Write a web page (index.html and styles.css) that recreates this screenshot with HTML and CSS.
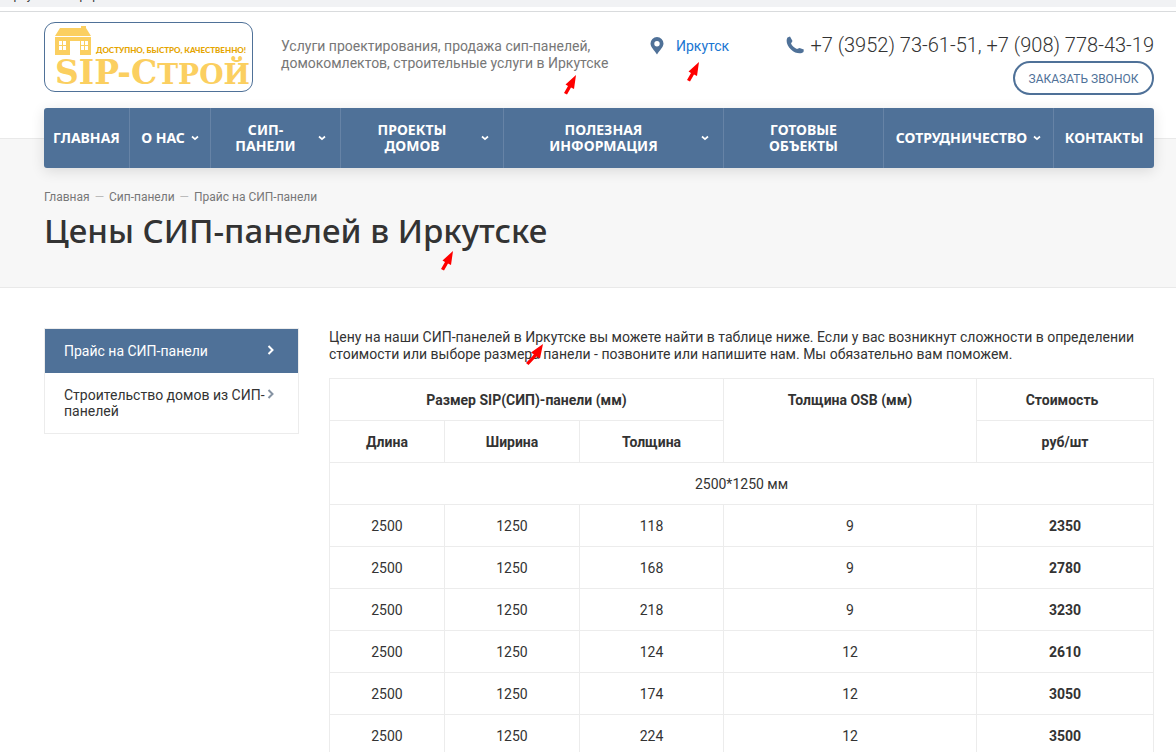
FILE: index.html
```
<!DOCTYPE html>
<html lang="ru">
<head>
<meta charset="utf-8">
<title>Цены СИП-панелей в Иркутске</title>
<link rel="stylesheet" href="styles.css">
</head>
<body>
<svg class="defs" width="0" height="0" aria-hidden="true">
  <symbol id="arrow" viewBox="0 0 12 20"><path d="M12 0 L10 14 L7 12.500 L3 19.500 L0 18 L4 11 L1.500 9.500 Z" fill="#fe0000"/></symbol>
  <symbol id="arrow-long" viewBox="0 0 17 21"><path d="M17 0 L14 14.500 L10.500 12.500 L2.500 21 L0 19 L8 10.500 L5 8.500 Z" fill="#fe0000"/></symbol>
  <symbol id="down" viewBox="0 0 8 6"><path d="M1 1.500 L4 4.200 L7 1.500" fill="none" stroke="#fff" stroke-width="1.700"/></symbol>
  <symbol id="right" viewBox="0 0 7 10"><path d="M1.500 1 L5.500 5 L1.500 9" fill="none" stroke="currentColor" stroke-width="2"/></symbol>
</svg>
<div class="strip"><span>Иркутск</span><span>фирм</span></div>
<header class="header">
  <a class="logo" href="#">
    <span class="logo-top">
      <svg class="house" viewBox="0 0 36 30" aria-hidden="true">
        <path fill="#fbcf60" fill-rule="evenodd" d="M5 3 H26 V1 H31 V3 L36 11 H0 Z M0 12 H36 V30 H25 V16 H15 V30 H0 Z M4 16 V25 H11 V16 Z M26 16 V25 H33 V16 Z"/>
        <path fill="#fbcf60" d="M7 16h1v9h-1z M4 20h7v1h-7z M29 16h1v9h-1z M26 20h7v1h-7z"/>
      </svg>
      <span class="slogan">ДОСТУПНО, БЫСТРО, КАЧЕСТВЕННО!</span>
    </span>
    <span class="brand">SIP-С<span class="brand-small">ТРОЙ</span></span>
  </a>
  <p class="about">Услуги проектирования, продажа сип-панелей,<br>домокомлектов, строительные услуги в Иркутске</p>
  <a class="city" href="#">
    <svg width="14" height="18" viewBox="0 0 14 18" aria-hidden="true"><path fill="#4f7198" fill-rule="evenodd" d="M7 0a6.500 6.500 0 0 1 6.500 6.500C13.500 10 9.500 13.500 7 17.500 4.500 13.500 .5 10 .5 6.500A6.500 6.500 0 0 1 7 0Z M7 4a2.700 2.700 0 1 0 0 5.400A2.700 2.700 0 0 0 7 4Z"/></svg>
    <span>Иркутск</span>
  </a>
  <div class="contacts">
    <div class="phones">
      <svg width="18" height="18" viewBox="0 0 18 18" aria-hidden="true"><path fill="#4f7198" d="M1.500 1.500 L4 .5 L6.500 5 L5 7.500 C6 10 8.500 12 11 13 L13.500 12 L17.800 13.500 L17.500 16 C15 18.500 9 17.500 5 13.500 C1 9.500 -.5 4.500 1.500 1.500Z"/></svg>
      <a href="#">+7 (3952) 73-61-51, +7 (908) 778-43-19</a>
    </div>
    <button class="callback" type="button">ЗАКАЗАТЬ ЗВОНОК</button>
  </div>
</header>
<section class="hero">
  <nav class="nav">
    <a href="#"><span>ГЛАВНАЯ</span></a>
    <a href="#"><span>О НАС</span><svg><use href="#down"/></svg></a>
    <a class="wide" href="#"><span>СИП-<br>ПАНЕЛИ</span><svg><use href="#down"/></svg></a>
    <a class="wide" href="#"><span>ПРОЕКТЫ<br>ДОМОВ</span><svg><use href="#down"/></svg></a>
    <a class="wide" href="#"><span>ПОЛЕЗНАЯ<br>ИНФОРМАЦИЯ</span><svg><use href="#down"/></svg></a>
    <a href="#"><span>ГОТОВЫЕ<br>ОБЪЕКТЫ</span></a>
    <a href="#"><span>СОТРУДНИЧЕСТВО</span><svg><use href="#down"/></svg></a>
    <a href="#"><span>КОНТАКТЫ</span></a>
  </nav>
  <div class="crumbs"><a href="#">Главная</a><i>—</i><a href="#">Сип-панели</a><i>—</i><span>Прайс на СИП-панели</span></div>
  <h1>Цены СИП-панелей в Иркутске</h1>
</section>
<main class="main">
  <aside class="side">
    <a class="active" href="#"><span>Прайс на СИП-панели</span><svg><use href="#right"/></svg></a>
    <a href="#"><span>Строительство домов из СИП-<br>панелей</span><svg><use href="#right"/></svg></a>
  </aside>
  <div class="content">
    <p class="intro">Цену на наши СИП-панелей в Иркутске вы можете найти в таблице ниже. Если у вас возникнут сложности в определении<br>стоимости или выборе размера панели - позвоните или напишите нам. Мы обязательно вам поможем.</p>
    <table>
      <colgroup><col class="c1"><col class="c2"><col class="c3"><col class="c4"><col class="c5"></colgroup>
      <thead>
        <tr><th colspan="3">Размер SIP(СИП)-панели (мм)</th><th rowspan="2">Толщина OSB (мм)</th><th class="cost">Стоимость</th></tr>
        <tr><th>Длина</th><th>Ширина</th><th>Толщина</th><th>руб/шт</th></tr>
      </thead>
      <tbody>
        <tr><td colspan="5">2500*1250 мм</td></tr>
        <tr><td>2500</td><td>1250</td><td>118</td><td>9</td><td><b>2350</b></td></tr>
        <tr><td>2500</td><td>1250</td><td>168</td><td>9</td><td><b>2780</b></td></tr>
        <tr><td>2500</td><td>1250</td><td>218</td><td>9</td><td><b>3230</b></td></tr>
        <tr><td>2500</td><td>1250</td><td>124</td><td>12</td><td><b>2610</b></td></tr>
        <tr><td>2500</td><td>1250</td><td>174</td><td>12</td><td><b>3050</b></td></tr>
        <tr><td>2500</td><td>1250</td><td>224</td><td>12</td><td><b>3500</b></td></tr>
      </tbody>
    </table>
  </div>
</main>
<svg class="arrow a1"><use href="#arrow"/></svg>
<svg class="arrow a2"><use href="#arrow"/></svg>
<svg class="arrow a3"><use href="#arrow"/></svg>
<svg class="arrow a4"><use href="#arrow-long"/></svg>
</body>
</html>
```
FILE: styles.css
```
* { box-sizing: border-box; }
html { overflow-x: hidden; scrollbar-width: none; }
body { margin: 0; position: relative; background: #fff; color: #333; font: 14px/17px Roboto, sans-serif; }
a { color: inherit; text-decoration: none; }
p, h1 { margin: 0; }
svg { flex: none; }
.defs { position: absolute; }

.strip { height: 7px; background: #f1f2f4; overflow: hidden; display: flex; align-items: flex-start; gap: 26px; padding-left: 5px; font-size: 12px; line-height: 4px; }
.strip span { margin-top: -7px; }
.header { margin-top: 4px; height: 127px; border-top: 1px solid #d9dbdd; padding: 10px 22px 0 44px; display: flex; align-items: flex-start; }

.logo { width: 209px; height: 70px; border: 1px solid #4f7198; border-radius: 11px; padding: 2px 0 0 10px; color: #fbcf60; white-space: nowrap; overflow: hidden; }
.logo-top { display: flex; align-items: flex-end; gap: 5px; height: 30px; }
.house { width: 36px; height: 30px; }
.slogan { font: 900 8px/10px Lato, sans-serif; color: #e5a500; }
.brand { display: block; font: bold 33px/36px "DejaVu Serif", serif; }
.brand-small { font-size: 28px; }

.about { margin: 16px 0 0 28px; width: 369px; color: #777; white-space: nowrap; }
.city { display: flex; gap: 12px; margin-top: 15px; color: #1976d2; line-height: 19px; }
.contacts { margin-left: auto; display: flex; flex-direction: column; align-items: flex-end; }
.phones { display: flex; align-items: center; gap: 6px; margin-top: 11px; font-size: 20px; line-height: 24px; font-weight: 300; }
.callback { margin-top: 4px; height: 34px; width: 141px; border: 2px solid #4f7198; border-radius: 17px; background: #fff; color: #4f7198; font: 12px Roboto, sans-serif; padding: 1px 0 0; white-space: nowrap; }

.hero { height: 150px; background: #f7f7f7; border-top: 1px solid #e9e9e9; border-bottom: 1px solid #e9e9e9; padding: 0 22px 0 44px; }
.nav { margin-top: -31px; height: 60px; display: grid; grid-template-columns: 86fr 81fr 130fr 163fr 220fr 160fr 170fr 100fr; background: #4f7198; border-radius: 3px; box-shadow: 0 3px 14px rgba(0,0,0,.12); color: #fff; font: bold 14px/16px "Noto Sans", sans-serif; text-align: center; }
.nav a { display: flex; align-items: center; justify-content: center; gap: 6px; border-right: 1px solid #6683a6; white-space: nowrap; min-width: 0; }
.nav a:last-child { border-right: 0; }
.nav svg { width: 8px; height: 6px; }
.nav .wide { padding-right: 14px; }
.nav .wide span { flex: 1; padding-left: 8px; }
.crumbs { margin-top: 20px; display: flex; gap: 5px; font-size: 12px; line-height: 18px; color: #777; }
.crumbs i { color: #bbb; font-style: normal; }
h1 { margin-top: 5px; font: 500 33px/40px "Noto Sans", sans-serif; }

.main { padding: 40px 22px 0 44px; display: flex; gap: 30px; align-items: flex-start; }
.side { width: 255px; border: 1px solid #ececec; line-height: 16px; }
.side a { display: flex; justify-content: space-between; gap: 1px; padding: 14px 24px 14px 19px; white-space: nowrap; }
.side .active { background: #4f7198; color: #fff; }
.side svg { width: 7px; height: 10px; margin-top: 2px; color: #8593a3; }
.side .active svg { color: #fff; }
.content { flex: 1; min-width: 0; }
.intro { margin-bottom: 15px; padding-top: 1px; white-space: nowrap; }
table { width: 100%; border-collapse: collapse; table-layout: fixed; text-align: center; }
th, td { border: 1px solid #ececec; height: 42px; padding: 13px 4px 11px; vertical-align: top; }
.c1 { width: 115px; }
.c2 { width: 135px; }
.c3 { width: 144px; }
.c4 { width: 253px; }
.c5 { width: 177px; }
.cost { padding-right: 10px; }

.arrow { position: absolute; width: 12px; height: 20px; }
.a1 { left: 564px; top: 75px; }
.a2 { left: 687px; top: 62px; }
.a3 { left: 441px; top: 251px; }
.a4 { left: 526px; top: 344px; width: 17px; height: 21px; }
```
